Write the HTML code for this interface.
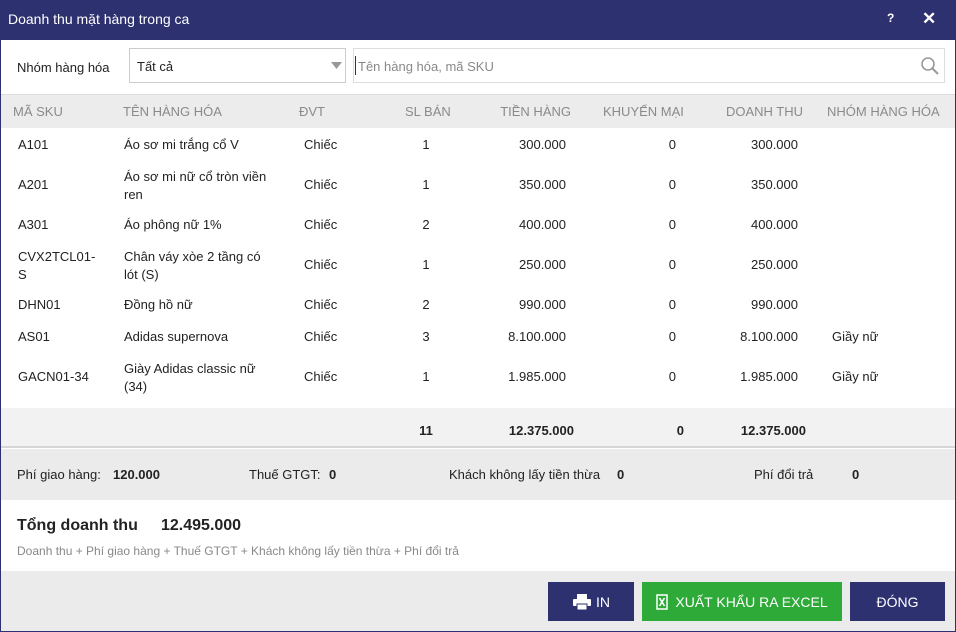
<!DOCTYPE html>
<html><head><meta charset="utf-8"><style>
*{margin:0;padding:0;box-sizing:border-box}
body{width:956px;height:632px;overflow:hidden;font-family:"Liberation Sans",sans-serif;font-size:13px;color:#222;background:#fff;position:relative}
.a{position:absolute;white-space:nowrap}
.r{text-align:right}
.bd{position:absolute;left:0;top:40px;width:956px;height:592px;border-left:1px solid #2d3170;border-right:1px solid #2d3170;border-bottom:1px solid #2d3170}
.h{color:#8a8a8a;font-size:13px}
.btn{position:absolute;top:582px;height:39px;color:#fff;font-size:14px;display:flex;align-items:center;justify-content:center}
</style></head><body>
<div style="position:absolute;left:0;top:0;width:956px;height:40px;background:#2d3170"></div>
<div class="a" style="left:8px;top:11px;color:#fff;font-size:14px">Doanh thu mặt hàng trong ca</div>
<div class="a" style="left:887px;top:11px;color:#fff;font-size:12px;font-weight:bold">?</div>
<div class="a" style="left:922px;top:9px;color:#fff;font-size:17px;font-weight:bold">✕</div>
<div class="bd"></div>
<div class="a" style="left:17px;top:60px">Nhóm hàng hóa</div>
<div style="position:absolute;left:129px;top:48px;width:217px;height:35px;border:1px solid #ccc"></div>
<div class="a" style="left:137px;top:59px">Tất cả</div>
<svg style="position:absolute;left:331px;top:62px" width="11" height="7" viewBox="0 0 11 7"><path d="M0 0H11L5.5 7Z" fill="#999"/></svg>
<div style="position:absolute;left:353px;top:48px;width:592px;height:35px;border:1px solid #ddd"></div>
<div style="position:absolute;left:355px;top:56px;width:1px;height:19px;background:#333"></div>
<div class="a" style="left:358px;top:59px;color:#888">Tên hàng hóa, mã SKU</div>
<svg style="position:absolute;left:920px;top:56px" width="20" height="20" viewBox="0 0 20 20"><circle cx="8" cy="8" r="6" fill="none" stroke="#999" stroke-width="1.6"/><path d="M12.5 12.5L18 18" stroke="#999" stroke-width="2"/></svg>
<div style="position:absolute;left:1px;top:94px;width:954px;height:34px;background:#ececec;border-top:1px solid #ddd"></div>
<div class="a h" style="left:13px;top:104px">MÃ SKU</div>
<div class="a h" style="left:123px;top:104px">TÊN HÀNG HÓA</div>
<div class="a h" style="left:299px;top:104px">ĐVT</div>
<div class="a h" style="left:405px;top:104px">SL BÁN</div>
<div class="a h r" style="left:471px;width:100px;top:104px">TIỀN HÀNG</div>
<div class="a h" style="left:603px;top:104px">KHUYẾN MẠI</div>
<div class="a h r" style="left:703px;width:100px;top:104px">DOANH THU</div>
<div class="a h" style="left:827px;top:104px">NHÓM HÀNG HÓA</div>

<div id="rows"></div>
<script>
var R=[[145,"A101","Áo sơ mi trắng cổ V","1","300.000","",""],
[185,"A201","Áo sơ mi nữ cổ tròn viền|ren","1","350.000",""],
[225,"A301","Áo phông nữ 1%","2","400.000",""],
[265,"CVX2TCL01-|S","Chân váy xòe 2 tầng có|lót (S)","1","250.000",""],
[305,"DHN01","Đồng hồ nữ","2","990.000",""],
[337,"AS01","Adidas supernova","3","8.100.000","Giầy nữ"],
[377,"GACN01-34","Giày Adidas classic nữ|(34)","1","1.985.000","Giầy nữ"]];
var h="";
function t(x,y,s,extra){var p=s.split("|");if(p.length==1)return '<div class="a" style="left:'+x+'px;top:'+(y-8)+'px;'+(extra||'')+'">'+s+'</div>';
return '<div class="a" style="left:'+x+'px;top:'+(y-17)+'px;line-height:18px">'+p[0]+'<br>'+p[1]+'</div>';}
R.forEach(function(r){var y=r[0];
h+=t(18,y,r[1])+t(124,y,r[2])+t(304,y,"Chiếc");
h+='<div class="a" style="left:406px;width:40px;text-align:center;top:'+(y-8)+'px">'+r[3]+'</div>';
h+='<div class="a r" style="left:466px;width:100px;top:'+(y-8)+'px">'+r[4]+'</div>';
h+='<div class="a r" style="left:576px;width:100px;top:'+(y-8)+'px">0</div>';
h+='<div class="a r" style="left:698px;width:100px;top:'+(y-8)+'px">'+r[4]+'</div>';
if(r[5])h+=t(832,y,r[5]);});
document.getElementById("rows").innerHTML=h;
</script>
<div style="position:absolute;left:1px;top:408px;width:954px;height:40px;background:#f2f2f2;border-bottom:2px solid #d6d6d6"></div>
<div class="a" style="left:406px;width:40px;text-align:center;top:423px;font-weight:bold">11</div>
<div class="a r" style="left:474px;width:100px;top:423px;font-weight:bold">12.375.000</div>
<div class="a r" style="left:584px;width:100px;top:423px;font-weight:bold">0</div>
<div class="a r" style="left:706px;width:100px;top:423px;font-weight:bold">12.375.000</div>
<div style="position:absolute;left:1px;top:449px;width:954px;height:51px;background:#ebebeb"></div>
<div class="a" style="left:17px;top:467px">Phí giao hàng:</div>
<div class="a" style="left:113px;top:467px;font-weight:bold">120.000</div>
<div class="a" style="left:249px;top:467px">Thuế GTGT:</div>
<div class="a" style="left:329px;top:467px;font-weight:bold">0</div>
<div class="a" style="left:449px;top:467px">Khách không lấy tiền thừa</div>
<div class="a" style="left:617px;top:467px;font-weight:bold">0</div>
<div class="a" style="left:754px;top:467px">Phí đổi trả</div>
<div class="a" style="left:852px;top:467px;font-weight:bold">0</div>
<div class="a" style="left:17px;top:517px;font-size:16px;font-weight:bold">Tổng doanh thu</div>
<div class="a" style="left:161px;top:517px;font-size:16px;font-weight:bold">12.495.000</div>
<div class="a" style="left:17px;top:544px;color:#888;font-size:12px">Doanh thu + Phí giao hàng + Thuế GTGT + Khách không lấy tiền thừa + Phí đổi trả</div>
<div style="position:absolute;left:1px;top:571px;width:954px;height:60px;background:#ebebeb"></div>
<div class="btn" style="left:548px;width:86px;background:#2d3170"><svg width="20" height="18" viewBox="0 0 20 18" style="margin-right:4px"><rect x="5" y="1" width="10" height="5" fill="#fff"/><rect x="1" y="6" width="18" height="7" rx="1" fill="#fff"/><rect x="5" y="11" width="10" height="6" fill="#fff" stroke="#2d3170"/></svg>IN</div>
<div class="btn" style="left:642px;width:200px;background:#2eaa38"><svg width="12" height="16" viewBox="0 0 12 16" style="margin-right:7px"><rect x="1" y="1" width="10" height="14" fill="none" stroke="#fff" stroke-width="1.5"/><path d="M3.5 4L8.5 12M8.5 4L3.5 12" stroke="#fff" stroke-width="1.6"/></svg>XUẤT KHẨU RA EXCEL</div>
<div class="btn" style="left:850px;width:95px;background:#2d3170">ĐÓNG</div>
</body></html>
